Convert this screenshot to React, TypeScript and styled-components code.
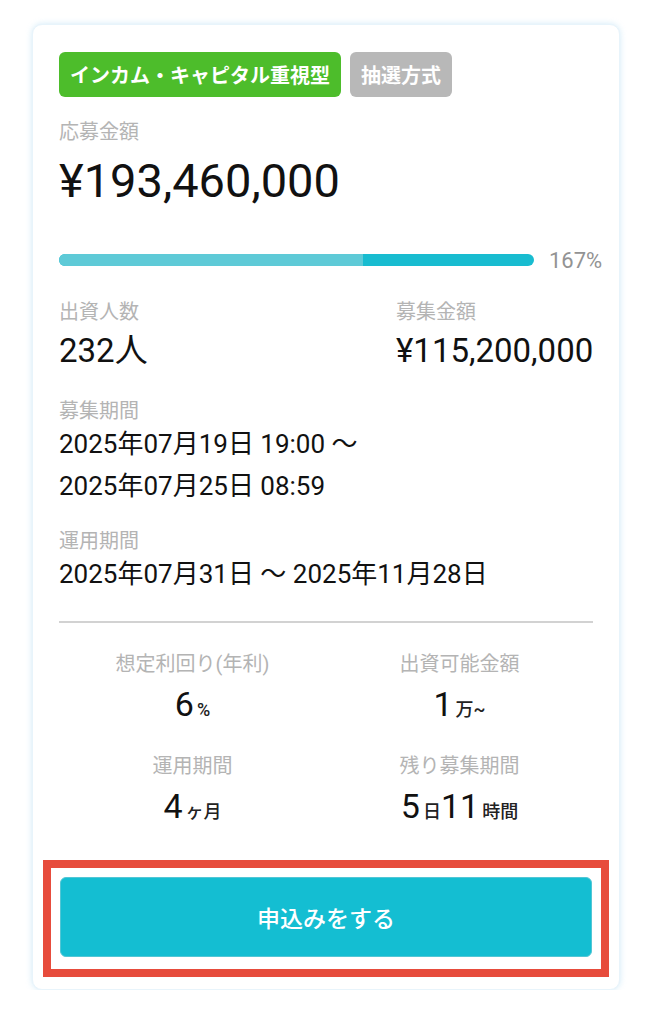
import styled, { createGlobalStyle } from 'styled-components';

const GlobalStyle = createGlobalStyle`
  body {
    margin: 0;
    background: #fff;
    font-family: Roboto, "Noto Sans CJK JP", sans-serif;
    color: #111;
  }
`;

const stats = [
  { label: '想定利回り(年利)', parts: [['6', '%']] },
  { label: '出資可能金額', parts: [['1', '万~']] },
  { label: '運用期間', parts: [['4', 'ヶ月']] },
  { label: '残り募集期間', parts: [['5', '日'], ['11', '時間']] },
];

export default function App() {
  return (
    <>
      <GlobalStyle />
      <Card>
        <TagRow>
          <Tag $color="#4dbd2b">インカム・キャピタル重視型</Tag>
          <Tag $color="#b8b8b8">抽選方式</Tag>
        </TagRow>

        <Label $top={23}>応募金額</Label>
        <Amount>¥193,460,000</Amount>

        <ProgressRow>
          <Track>
            <Fill style={{ width: '64%' }} />
          </Track>
          <Percent>167%</Percent>
        </ProgressRow>

        <TwoCol>
          <div>
            <Label>出資人数</Label>
            <BigValue>232人</BigValue>
          </div>
          <div>
            <Label>募集金額</Label>
            <BigValue>¥115,200,000</BigValue>
          </div>
        </TwoCol>

        <Label $top={30}>募集期間</Label>
        <DateValue>
          2025年07月19日 19:00 〜
          <br />
          2025年07月25日 08:59
        </DateValue>

        <Label $top={22}>運用期間</Label>
        <DateValue>2025年07月31日 〜 2025年11月28日</DateValue>

        <Divider />

        <StatGrid>
          {stats.map((s) => (
            <Stat key={s.label}>
              <StatLabel>{s.label}</StatLabel>
              <StatValue>
                {s.parts.map(([num, unit]) => (
                  <span key={num + unit}>
                    <Num>{num}</Num>
                    <Unit>{unit}</Unit>
                  </span>
                ))}
              </StatValue>
            </Stat>
          ))}
        </StatGrid>

        <Highlight>
          <ApplyButton>申込みをする</ApplyButton>
        </Highlight>
      </Card>
    </>
  );
}

const Card = styled.div`
  margin: 24px 34px 0 32px;
  padding: 27px 26px 12px;
  background: #fff;
  border-radius: 10px;
  border: 1px solid #e8f4fb;
  box-shadow: 0 0 6px rgba(190, 225, 245, 0.7);
`;

const TagRow = styled.div`
  display: flex;
  gap: 9px;
`;

const Tag = styled.span<{ $color: string }>`
  display: inline-flex;
  align-items: center;
  height: 45px;
  padding: 0 11px;
  border-radius: 6px;
  background: ${(p) => p.$color};
  color: #fff;
  font-size: 20px;
  font-weight: 700;
`;

const Label = styled.div<{ $top?: number }>`
  margin-top: ${(p) => p.$top ?? 0}px;
  font-size: 20px;
  line-height: 24px;
  color: #b4b4b4;
`;

const Amount = styled.div`
  margin-top: 12px;
  font-size: 47px;
  line-height: 50px;
  color: #111;
`;

const ProgressRow = styled.div`
  display: flex;
  align-items: center;
  gap: 15px;
  margin-top: 42px;
  height: 24px;
  white-space: nowrap;
`;

const Track = styled.div`
  flex: 0 0 475px;
  height: 12px;
  border-radius: 6px;
  background: #18bcd0;
  overflow: hidden;
`;

const Fill = styled.div`
  height: 100%;
  background: #5ecad7;
`;

const Percent = styled.span`
  font-size: 22px;
  color: #939393;
`;

const TwoCol = styled.div`
  display: grid;
  grid-template-columns: 337px 1fr;
  margin-top: 28px;
`;

const BigValue = styled.div`
  margin-top: 9px;
  font-size: 33px;
  line-height: 36px;
`;

const DateValue = styled.div`
  font-size: 26px;
  line-height: 42px;
`;

const Divider = styled.hr`
  margin: 26px 0 0;
  border: none;
  height: 2px;
  background: #d2d2d2;
`;

const StatGrid = styled.div`
  display: grid;
  grid-template-columns: 1fr 1fr;
  row-gap: 30px;
  margin-top: 29px;
`;

const Stat = styled.div`
  text-align: center;
`;

const StatLabel = styled.div`
  font-size: 20px;
  line-height: 24px;
  color: #b4b4b4;
`;

const StatValue = styled.div`
  margin-top: 8px;
  height: 40px;
  line-height: 40px;
`;

const Num = styled.span`
  font-size: 34px;
  line-height: 40px;
  margin-right: 3px;
`;

const Unit = styled.span`
  font-size: 18px;
  line-height: 40px;
  font-weight: 500;
  color: #222;
`;

const Highlight = styled.div`
  margin: 34px -16px 0;
  border: 8px solid #e74c3c;
  padding: 9px 9px 12px;
`;

const ApplyButton = styled.button`
  display: block;
  width: 100%;
  height: 80px;
  border: 1px solid #52c6d5;
  border-radius: 6px;
  background: #14bed2;
  color: #fff;
  font-family: Roboto, "Noto Sans CJK JP", sans-serif;
  font-size: 23px;
  font-weight: 500;
  cursor: pointer;
`;
